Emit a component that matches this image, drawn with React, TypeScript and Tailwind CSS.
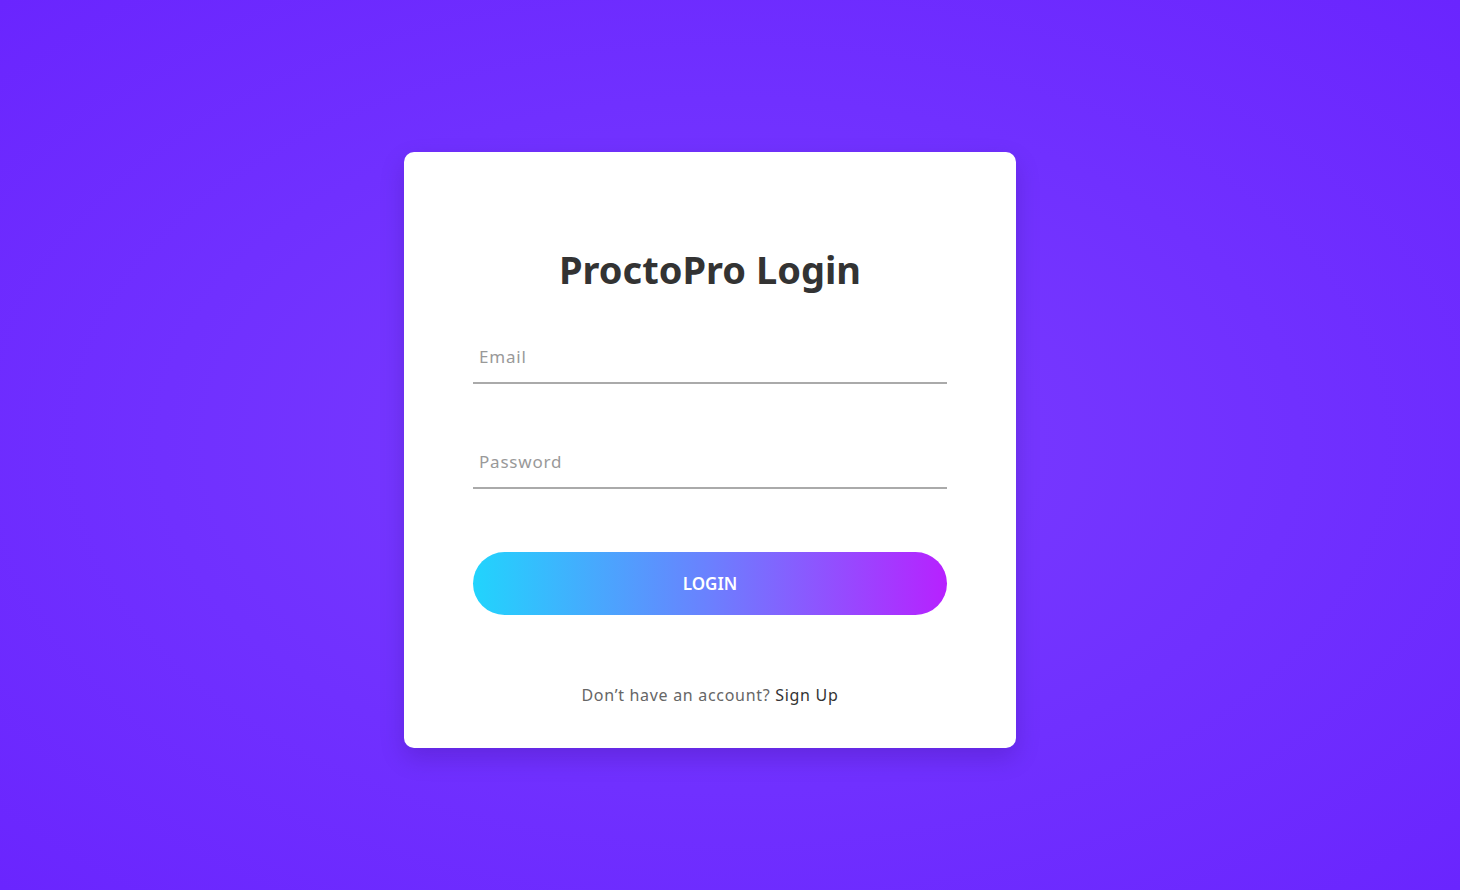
const font = "font-['Noto_Sans',_'Open_Sans',_sans-serif]";

const App = () => {
  return (
    <div
      className={`h-[890px] w-full flex items-center justify-center pt-[10px] pr-[40px] bg-[radial-gradient(ellipse_at_center,#7b3dff_0%,#7030ff_55%,#6a25fe_100%)] ${font}`}
    >
      <div className="w-[612px] bg-white rounded-[10px] px-[69px] pt-[90px] pb-[42px] shadow-[0_10px_25px_rgba(40,0,90,0.2)]">
        <h1 className="text-center text-[38px] leading-[54px] font-bold text-[#333]">
          ProctoPro Login
        </h1>
        <form className="mt-[38px] flex flex-col" onSubmit={(e) => e.preventDefault()}>
          <input
            type="email"
            placeholder="Email"
            className="h-[50px] pb-[3px] px-[6px] border-b-2 border-[#aaa] text-[17px] tracking-[0.8px] text-[#333] placeholder:text-[#999] outline-none"
          />
          <input
            type="password"
            placeholder="Password"
            className="mt-[55px] h-[50px] pb-[3px] px-[6px] border-b-2 border-[#aaa] text-[17px] tracking-[0.8px] text-[#333] placeholder:text-[#999] outline-none"
          />
          <button
            type="submit"
            className="mt-[63px] h-[63px] rounded-full bg-[linear-gradient(90deg,#21d4fd_0%,#6b80fe_50%,#b721ff_100%)] text-white text-[17px] font-semibold"
          >
            LOGIN
          </button>
        </form>
        <p className="mt-[69px] text-center text-[16px] leading-[22px] tracking-[0.7px] text-[#666]">
          Don’t have an account? <a className="text-[#333]" href="#">Sign Up</a>
        </p>
      </div>
    </div>
  );
};

export default App;
